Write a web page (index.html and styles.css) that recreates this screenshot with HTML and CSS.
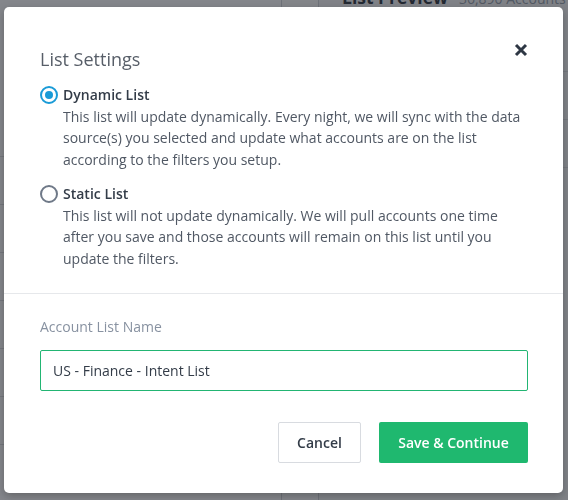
FILE: index.html
```html
<!DOCTYPE html>
<html lang="en">
<head>
<meta charset="utf-8">
<title>List Settings</title>
<link rel="stylesheet" href="styles.css">
</head>
<body>
<div class="page">
  <aside class="side">
    <div class="side-row"></div>
    <div class="side-row"></div>
    <div class="side-row"></div>
    <div class="side-row"></div>
    <div class="side-row"></div>
    <div class="side-row"></div>
    <div class="side-row"></div>
  </aside>
  <div class="gutter"></div>
  <main class="preview">
    <div class="preview-head">
      <span class="preview-title">List Preview</span>
      <span class="preview-count">36,890 Accounts</span>
    </div>
    <div class="preview-row"></div>
    <div class="preview-row"></div>
    <div class="preview-row"></div>
  </main>
</div>

<div class="overlay">
  <div class="modal" role="dialog" aria-labelledby="modal-title">
    <button class="close" type="button" aria-label="Close">
      <svg width="14" height="14" viewBox="0 0 14 14" aria-hidden="true">
        <path d="M2 2 L12 12 M12 2 L2 12" stroke="#2e3744" stroke-width="3" fill="none"/>
      </svg>
    </button>
    <div class="modal-top">
      <h2 class="modal-title" id="modal-title">List Settings</h2>
      <div class="options">
        <div class="option">
          <span class="radio radio-checked"></span>
          <div class="opt-text">
            <div class="opt-title">Dynamic List</div>
            <div class="opt-desc">This list will update dynamically. Every night, we will sync with the data source(s) you selected and update what accounts are on the list according to the filters you setup.</div>
          </div>
        </div>
        <div class="option">
          <span class="radio"></span>
          <div class="opt-text">
            <div class="opt-title">Static List</div>
            <div class="opt-desc">This list will not update dynamically. We will pull accounts one time after you save and those accounts will remain on this list until you update the filters.</div>
          </div>
        </div>
      </div>
    </div>
    <div class="modal-bottom">
      <div class="field-label">Account List Name</div>
      <div class="field-input">US - Finance - Intent List</div>
      <div class="actions">
        <button class="btn btn-cancel" type="button">Cancel</button>
        <button class="btn btn-primary" type="button">Save &amp; Continue</button>
      </div>
    </div>
  </div>
</div>
</body>
</html>
```
FILE: styles.css
```css
* { box-sizing: border-box; }

html, body {
  margin: 0;
  height: 100%;
}

body {
  font-family: "Open Sans", "Liberation Sans", sans-serif;
  background: #ffffff;
  overflow: hidden;
}

/* Background page (dimmed by overlay) */
.page {
  display: grid;
  grid-template-columns: 282px 37px 1fr;
  height: 516px;
  margin-top: -16px;
  overflow: hidden;
}

.side {
  background: #fbfbfc;
  border-right: 1px solid #c9cdd3;
  padding-top: 125px;
}

.side-row {
  height: 48px;
  border-bottom: 1px solid #d6d9de;
}

.gutter {
  background: #f7f8f9;
  border-right: 1px solid #c9cdd3;
}

.preview {
  background: #f1f2f4;
  padding-left: 23px;
}

.preview-head {
  display: flex;
  align-items: baseline;
  gap: 11px;
  height: 40px;
  white-space: nowrap;
}

.preview-title {
  font-size: 17.5px;
  font-weight: 700;
  line-height: 26px;
  color: #1f2733;
}

.preview-count {
  font-size: 14px;
  color: #8a94a2;
}

.preview-row {
  height: 48px;
  border-bottom: 1px solid #d6d9de;
}

/* Overlay + modal */
.overlay {
  position: fixed;
  inset: 0;
  background: rgba(40, 43, 50, 0.56);
  display: flex;
  align-items: flex-start;
  padding: 7px 5px 0 4px;
}

.modal {
  position: relative;
  width: 559px;
  background: #ffffff;
  border-radius: 5px;
  box-shadow: 0 3px 8px rgba(0, 0, 0, 0.25);
}

.close {
  position: absolute;
  top: 33px;
  right: 32px;
  width: 20px;
  height: 20px;
  padding: 0;
  border: 0;
  background: transparent;
  display: flex;
  align-items: center;
  justify-content: center;
  cursor: pointer;
}

.modal-top {
  padding: 39px 36px 24px 36px;
  border-bottom: 1px solid #e6e8eb;
}

.modal-title {
  margin: 0;
  font-size: 18px;
  font-weight: 400;
  line-height: 26px;
  color: #575e68;
}

.options {
  margin-top: 12px;
  display: flex;
  flex-direction: column;
  gap: 13px;
}

.option {
  display: flex;
  gap: 5px;
  align-items: flex-start;
}

.radio {
  flex: none;
  width: 18px;
  height: 18px;
  margin-top: 2px;
  border-radius: 50%;
  border: 2px solid #6f7988;
  display: flex;
  align-items: center;
  justify-content: center;
}

.radio-checked {
  border: 2.5px solid #1a9bd7;
}

.radio-checked::after {
  content: "";
  width: 8px;
  height: 8px;
  border-radius: 50%;
  background: #1a9bd7;
}

.opt-title {
  font-size: 14px;
  font-weight: 600;
  line-height: 21.5px;
  color: #333c48;
}

.opt-desc {
  font-size: 14px;
  line-height: 21.5px;
  color: #505864;
}

.modal-bottom {
  padding: 22px 35px 30px 36px;
}

.field-label {
  font-size: 14px;
  line-height: 22px;
  color: #8892a1;
}

.field-input {
  margin-top: 12px;
  height: 41px;
  border: 1px solid #22b573;
  border-radius: 2px;
  padding: 0 12px;
  display: flex;
  align-items: center;
  font-size: 14px;
  color: #333c48;
}

.actions {
  margin-top: 31px;
  display: flex;
  justify-content: flex-end;
  gap: 18px;
}

.btn {
  height: 41px;
  border-radius: 2px;
  font-family: inherit;
  font-size: 14px;
  font-weight: 600;
  cursor: pointer;
}

.btn-cancel {
  width: 83px;
  background: #ffffff;
  border: 1px solid #d8dbe0;
  color: #333c48;
}

.btn-primary {
  width: 149px;
  background: #1fb86f;
  border: 0;
  color: #ffffff;
}
```
